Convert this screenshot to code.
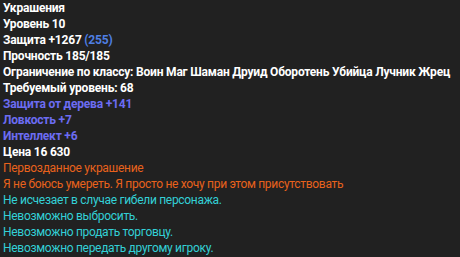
import React from "react";

interface Line {
  text: React.ReactNode;
  color: string;
  bold?: boolean;
}

const lines: Line[] = [
  { text: "Украшения", color: "text-white", bold: true },
  { text: "Уровень 10", color: "text-white", bold: true },
  {
    text: (
      <>
        Защита +1267 <span className="text-[#4f7fe3]">(255)</span>
      </>
    ),
    color: "text-white",
    bold: true,
  },
  { text: "Прочность 185/185", color: "text-white", bold: true },
  {
    text: "Ограничение по классу: Воин Маг Шаман Друид Оборотень Убийца Лучник Жрец",
    color: "text-white",
    bold: true,
  },
  { text: "Требуемый уровень: 68", color: "text-white", bold: true },
  { text: "Защита от дерева +141", color: "text-[#6c6cf2]", bold: true },
  { text: "Ловкость +7", color: "text-[#6c6cf2]", bold: true },
  { text: "Интеллект +6", color: "text-[#6c6cf2]", bold: true },
  { text: "Цена 16 630", color: "text-white", bold: true },
  { text: "Первозданное украшение", color: "text-[#e8621c]" },
  {
    text: "Я не боюсь умереть. Я просто не хочу при этом присутствовать",
    color: "text-[#e8621c]",
  },
  { text: "Не исчезает в случае гибели персонажа.", color: "text-[#33d0d6]" },
  { text: "Невозможно выбросить.", color: "text-[#33d0d6]" },
  { text: "Невозможно продать торговцу.", color: "text-[#33d0d6]" },
  { text: "Невозможно передать другому игроку.", color: "text-[#33d0d6]" },
];

const App = () => {
  return (
    <div className="bg-[#212121] w-[460px] h-[257px] overflow-hidden pl-[3px] font-['Roboto',sans-serif] text-[12px] leading-[16px]">
      {lines.map((line, i) => (
        <div
          key={i}
          className={`${line.color} ${
            line.bold ? "font-bold tracking-[-0.2px]" : "font-normal tracking-[-0.3px]"
          } whitespace-nowrap`}
        >
          {line.text}
        </div>
      ))}
    </div>
  );
};

export default App;
